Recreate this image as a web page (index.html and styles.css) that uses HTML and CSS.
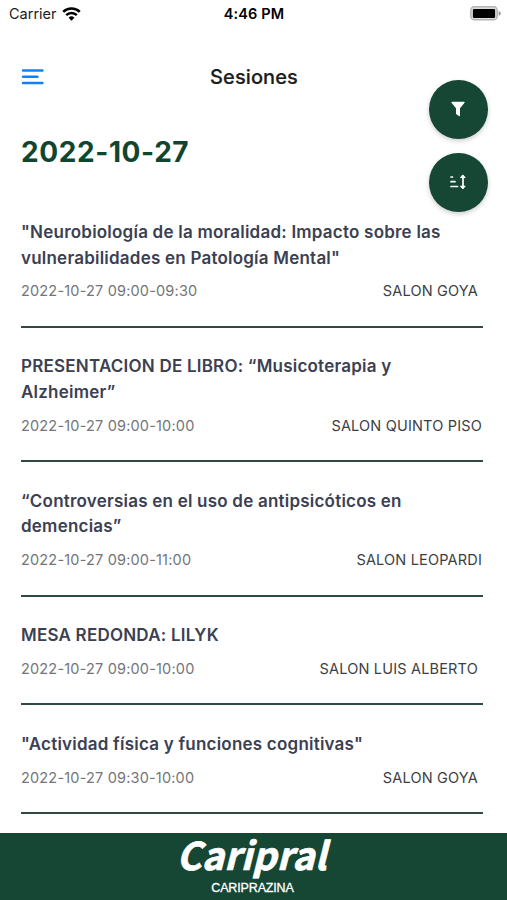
FILE: index.html
```
<!DOCTYPE html>
<html lang="es">
<head>
    <meta charset="UTF-8">
    <meta name="viewport" content="width=device-width, initial-scale=1.0">
    <title>Sesiones</title>
    <link rel="stylesheet" href="styles.css">
</head>
<body>
    <div class="app">
        <div class="status">
            <div class="carrier">
                <span>Carrier</span>
                <svg width="19" height="14" viewBox="0 0 19 14" fill="none" stroke="#000" stroke-width="2.5">
                    <path d="M1.2 4.8a11.8 11.8 0 0 1 16.6 0"/>
                    <path d="M4.2 8.2a7.5 7.5 0 0 1 10.6 0"/>
                    <path d="M9.5 13.7L6.6 10.8a4.1 4.1 0 0 1 5.8 0z" fill="#000" stroke="none"/>
                </svg>
            </div>
            <div class="time">4:46 PM</div>
            <div class="battery">
                <svg width="31" height="15" viewBox="0 0 31 15">
                    <rect x="0.8" y="0.8" width="26.4" height="13" rx="3.6" fill="#ddd" stroke="#b5b5b5" stroke-width="1.5"/>
                    <rect x="2.9" y="2.9" width="22.2" height="9" rx="1.2" fill="#000"/>
                    <path d="M28.6 5.2a2.2 2.2 0 0 1 0 4.4z" fill="#999"/>
                </svg>
            </div>
        </div>

        <header class="header">
            <button class="menu" aria-label="Menú">
                <svg width="24" height="18" viewBox="0 0 24 18" stroke="#1580f5" stroke-width="2.4" stroke-linecap="round">
                    <path d="M3 2.5h19.5M3 8.8h14.5M3 15h19.5"/>
                </svg>
            </button>
            <h1>Sesiones</h1>
        </header>

        <div class="actions">
            <button class="fab" aria-label="Filtrar">
                <svg width="14" height="16" viewBox="0 0 14 16" fill="#fff">
                    <path d="M1 .7h12a.6.6 0 0 1 .5 1L9 7.2v7.3a.7.7 0 0 1-1.1.6L5.4 13.2a.8.8 0 0 1-.4-.7V7.2L.5 1.7A.6.6 0 0 1 1 .7z"/>
                </svg>
            </button>
            <button class="fab" aria-label="Ordenar">
                <svg width="18" height="16" viewBox="0 0 18 16" fill="none" stroke="#fff" stroke-width="1.7" stroke-linecap="round" stroke-linejoin="round">
                    <path d="M2 3h1.5M2 7.7h4M2 12.5h6.5"/>
                    <path d="M14 2v12"/>
                    <path d="M14 1.2l2.2 2.4h-4.4zM14 14.6l2.2-2.4h-4.4z" fill="#fff" stroke-width="1"/>
                </svg>
            </button>
        </div>

        <main class="sessions">
            <h2>2022-10-27</h2>
            <div class="session">
                <h3>"Neurobiología de la moralidad: Impacto sobre las vulnerabilidades en Patología Mental"</h3>
                <div class="info"><span>2022-10-27 09:00-09:30</span><span class="room spaced">SALON GOYA</span></div>
            </div>
            <div class="session">
                <h3>PRESENTACION DE LIBRO: “Musicoterapia y Alzheimer”</h3>
                <div class="info"><span>2022-10-27 09:00-10:00</span><span class="room">SALON QUINTO PISO</span></div>
            </div>
            <div class="session">
                <h3>“Controversias en el uso de antipsicóticos en demencias”</h3>
                <div class="info"><span>2022-10-27 09:00-11:00</span><span class="room">SALON LEOPARDI</span></div>
            </div>
            <div class="session">
                <h3>MESA REDONDA: LILYK</h3>
                <div class="info"><span>2022-10-27 09:00-10:00</span><span class="room spaced">SALON LUIS ALBERTO</span></div>
            </div>
            <div class="session">
                <h3>"Actividad física y funciones cognitivas"</h3>
                <div class="info"><span>2022-10-27 09:30-10:00</span><span class="room spaced">SALON GOYA</span></div>
            </div>
        </main>

        <footer class="banner">
            <div class="brand">Caripral</div>
            <div class="drug">CARIPRAZINA</div>
        </footer>
    </div>
</body>
</html>
```
FILE: styles.css
```
* {
    box-sizing: border-box;
}
body {
    margin: 0;
    font-family: Inter, "Liberation Sans", sans-serif;
    background: #fff;
    color: #1c1c1e;
}
h1, h2, h3 {
    margin: 0;
}
button {
    padding: 0;
    border: none;
    background: none;
    cursor: pointer;
}
svg {
    display: block;
}
.app {
    position: relative;
    display: flex;
    flex-direction: column;
    height: 900px;
    overflow: hidden;
}
.status {
    display: grid;
    grid-template-columns: 1fr auto 1fr;
    align-items: center;
    height: 27px;
    padding: 0 6px 0 9px;
    font-size: 14.5px;
}
.carrier {
    display: flex;
    align-items: center;
    gap: 5px;
}
.time {
    padding-right: 2px;
    font-weight: 600;
    letter-spacing: 0.1px;
    color: #000;
}
.battery {
    display: flex;
    justify-content: flex-end;
}
.header {
    display: grid;
    grid-template-columns: 60px 1fr 60px;
    align-items: center;
    height: 100px;
    padding: 0 19px 0 20px;
}
.header h1 {
    font-size: 20px;
    font-weight: 500;
    letter-spacing: 0.1px;
    text-align: center;
    -webkit-text-stroke: 0.2px #1c1c1e;
}
.actions {
    position: absolute;
    top: 80px;
    right: 19.5px;
    display: flex;
    flex-direction: column;
    gap: 14.4px;
}
.fab {
    display: flex;
    align-items: center;
    justify-content: center;
    width: 58.6px;
    height: 58.6px;
    border-radius: 50%;
    background: #154734;
    box-shadow: 0 2px 5px rgba(0, 0, 0, 0.2);
}
.sessions {
    flex: 1;
    padding: 4px 24px 0 21px;
}
.sessions h2 {
    height: 62.6px;
    font-size: 28px;
    line-height: 42px;
    font-weight: 700;
    letter-spacing: 0.6px;
    color: #104530;
}
.session {
    padding: 26.4px 0 24.6px;
    border-bottom: 2px solid #2f4a40;
}
.session h3 {
    padding-right: 30px;
    font-size: 17px;
    line-height: 25.7px;
    font-weight: 600;
    letter-spacing: 0.22px;
    color: #3b4052;
}
.info {
    display: flex;
    justify-content: space-between;
    margin-top: 9px;
    font-size: 14.5px;
    line-height: 21px;
    letter-spacing: 0.18px;
    color: #73757b;
}
.room {
    padding-right: 1px;
    color: #3c3e44;
}
.spaced {
    padding-right: 5px;
}
.banner {
    display: flex;
    flex-direction: column;
    align-items: center;
    height: 67px;
    background: #154734;
    color: #fff;
}
.brand {
    padding-right: 4px;
    font-family: "Noto Sans CJK SC", "Open Sans", sans-serif;
    font-size: 38px;
    line-height: 41px;
    font-weight: 700;
    font-style: italic;
    -webkit-text-stroke: 0.7px #fff;
}
.drug {
    padding-right: 2px;
    font-family: "Liberation Sans", Arial, sans-serif;
    font-size: 12.5px;
    line-height: 28px;
    letter-spacing: -0.15px;
    -webkit-text-stroke: 0.3px #fff;
}
```
